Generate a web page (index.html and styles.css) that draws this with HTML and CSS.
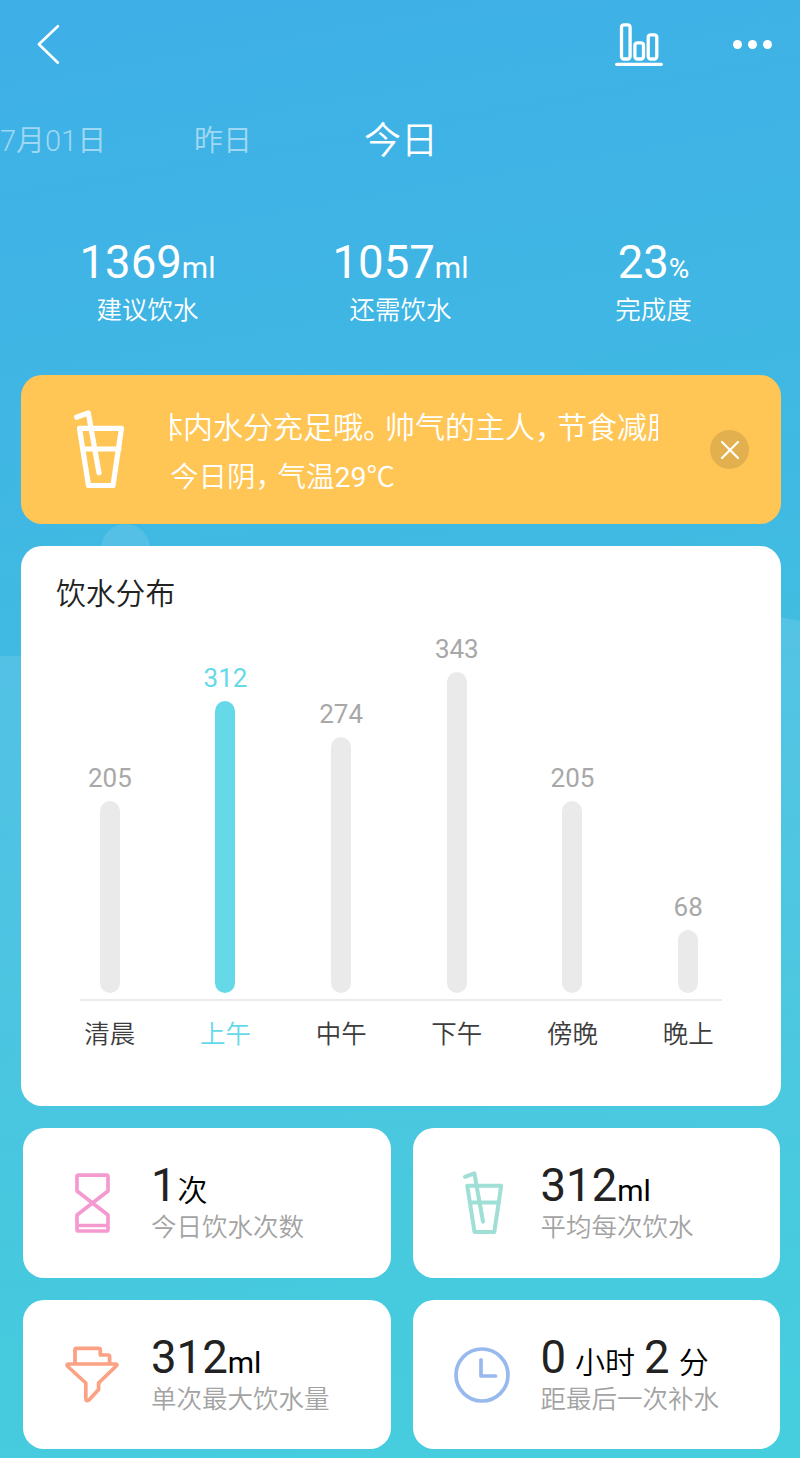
FILE: index.html
```
<!DOCTYPE html>
<html lang="zh-CN">
<head>
    <meta charset="UTF-8">
    <meta name="viewport" content="width=device-width, initial-scale=1.0">
    <title>今日饮水</title>
    <link rel="stylesheet" href="styles.css">
</head>
<body>
    <!-- Iconos compartidos -->
    <svg class="defs" width="0" height="0">
        <symbol id="cup" viewBox="0 0 52 80">
            <path d="M3.7 8.3 15.3 3.9 26 63.7M6.5 19.3H48.5L40 76.5H15.5ZM10 40H46"/>
        </symbol>
    </svg>

    <div class="app">
        <div class="bubble"></div>
        <svg class="waves" viewBox="0 0 800 860" preserveAspectRatio="none">
            <defs>
                <linearGradient id="fade" x1="0" y1="0" x2="0" y2="1">
                    <stop offset="0" stop-color="#fff" stop-opacity=".11"/>
                    <stop offset="1" stop-color="#fff" stop-opacity="0"/>
                </linearGradient>
            </defs>
            <path fill="url(#fade)" d="M0 58C200 60 280 -40 500 -30C650 -20 720 10 800 23V700H0Z"/>
        </svg>

        <header class="topbar">
            <svg class="back" width="24" height="42" viewBox="0 0 24 42"><path d="M20.9 3.2 1.9 21.3 20.9 39.7"/></svg>
            <div class="tools">
                <svg class="chart-icon" width="48" height="44" viewBox="0 0 48 44">
                    <rect x="6.5" y="1.8" width="8.6" height="34.2" rx="2.5"/>
                    <rect x="19.9" y="19.8" width="8.6" height="16.2" rx="2.5"/>
                    <rect x="33.2" y="11.8" width="8.6" height="24.2" rx="2.5"/>
                    <path d="M1.7 41.3H46.3"/>
                </svg>
                <div class="more"><i></i><i></i><i></i></div>
            </div>
        </header>

        <nav class="days">
            <span>07月01日</span>
            <span>昨日</span>
            <span class="active">今日</span>
        </nav>

        <section class="stats">
            <div class="stat">
                <div class="num">1369<small>ml</small></div>
                <div class="label">建议饮水</div>
            </div>
            <div class="stat">
                <div class="num">1057<small>ml</small></div>
                <div class="label">还需饮水</div>
            </div>
            <div class="stat">
                <div class="num">23<small class="pct">%</small></div>
                <div class="label">完成度</div>
            </div>
        </section>

        <section class="notice">
            <svg class="notice-icon" width="52" height="80"><use href="#cup"/></svg>
            <div class="notice-text">
                <p class="marquee"><span>体内水分充足哦<b>。</b>帅气的主人<b>，</b>节食减肥</span></p>
                <p class="weather">今日阴<b>，</b>气温<em>29</em>℃</p>
            </div>
            <div class="close">
                <svg width="20" height="20" viewBox="0 0 20 20"><path d="M2 2 18 18M18 2 2 18"/></svg>
            </div>
        </section>

        <section class="chart">
            <h2>饮水分布</h2>
            <div class="bars">
                <div class="col"><span>205</span><div class="bar" style="height:192px"></div></div>
                <div class="col on"><span>312</span><div class="bar" style="height:292px"></div></div>
                <div class="col"><span>274</span><div class="bar" style="height:256px"></div></div>
                <div class="col"><span>343</span><div class="bar" style="height:321px"></div></div>
                <div class="col"><span>205</span><div class="bar" style="height:192px"></div></div>
                <div class="col"><span>68</span><div class="bar" style="height:63px"></div></div>
            </div>
            <div class="axis"></div>
            <div class="names">
                <span>清晨</span>
                <span class="on">上午</span>
                <span>中午</span>
                <span>下午</span>
                <span>傍晚</span>
                <span>晚上</span>
            </div>
        </section>

        <section class="cards">
            <div class="card">
                <div class="icon pink">
                    <svg width="36" height="60" viewBox="0 0 36 60"><path d="M4.5 2.2H31.5Q33 2.2 33 3.7V18L2 42V56.5Q2 58 3.5 58H31.5Q33 58 33 56.5V42L2 18V3.7Q2 2.2 3.5 2.2ZM2 52.5H33"/></svg>
                </div>
                <div class="info">
                    <div class="num">1<small class="times">次</small></div>
                    <div class="label">今日饮水次数</div>
                </div>
            </div>
            <div class="card">
                <div class="icon green">
                    <svg width="42" height="65"><use href="#cup"/></svg>
                </div>
                <div class="info">
                    <div class="num">312<small>ml</small></div>
                    <div class="label">平均每次饮水</div>
                </div>
            </div>
            <div class="card">
                <div class="icon orange">
                    <svg width="54" height="57" viewBox="0 0 54 57"><path d="M10 18V4Q10 2.4 11.6 2.4H33.7Q35.3 2.4 35.3 4V9H43Q44.6 9 44.6 10.6V18M3.5 18H50.5Q53 18 51.2 20L33.6 37V43.5L24 54Q20.8 56 20.8 52.5V37L2.8 20.5Q1 18 3.5 18Z"/></svg>
                </div>
                <div class="info">
                    <div class="num">312<small>ml</small></div>
                    <div class="label">单次最大饮水量</div>
                </div>
            </div>
            <div class="card">
                <div class="icon blue">
                    <svg width="56" height="56" viewBox="0 0 56 56"><circle cx="28" cy="28" r="26"/><path d="M27 12.8V29H41.5"/></svg>
                </div>
                <div class="info">
                    <div class="num">0<small class="gap">小时</small>2<small class="gap">分</small></div>
                    <div class="label">距最后一次补水</div>
                </div>
            </div>
        </section>
    </div>
</body>
</html>
```
FILE: styles.css
```
* { box-sizing: border-box; margin: 0; padding: 0; }
body {
    font-family: Roboto, 'Noto Sans CJK SC', sans-serif;
    color: white;
}
svg { display: block; fill: none; stroke: currentColor; stroke-linecap: round; stroke-linejoin: round; }
.defs { position: absolute; }
.app {
    position: relative;
    width: 800px;
    height: 1458px;
    overflow: hidden;
    background: linear-gradient(170deg, #3eafe7 0%, #40bae2 40%, #46cade 85%, #46cede 100%);
}

/* fondo */
.bubble {
    position: absolute;
    left: 101px;
    top: 524px;
    width: 49px;
    height: 49px;
    border-radius: 50%;
    background: rgba(255,255,255,0.11);
}
.waves { position: absolute; left: 0; top: 598px; width: 800px; height: 860px; stroke: none; }

/* barra superior */
.topbar {
    position: relative;
    height: 90px;
    padding: 23px 28px 0 37px;
    display: flex;
    justify-content: space-between;
}
.back { stroke-width: 2.6; }
.tools { display: flex; gap: 70px; }
.chart-icon { stroke-width: 3.3; }
.more { display: flex; gap: 6px; padding-top: 17px; }
.more i { width: 9px; height: 9px; border-radius: 50%; background: white; }

/* fechas */
.days {
    position: relative;
    display: flex;
    margin-left: -44px;
    height: 100px;
    line-height: 103px;
    font-size: 29px;
    font-weight: 350;
}
.days span { width: 178px; text-align: center; color: rgba(255,255,255,0.5); }
.days .active { font-size: 37px; color: white; }

/* resumen */
.stats {
    position: relative;
    display: grid;
    grid-template-columns: repeat(3, 1fr);
    margin: 45px 20px 0 21px;
    height: 140px;
    text-align: center;
}
.num { font-size: 45.5px; line-height: 56px; height: 56px; white-space: nowrap; }
.num small { font-size: 30px; }
.num .pct { font-size: 28px; }
.label { font-size: 25.5px; line-height: 36px; font-weight: 350; white-space: nowrap; }
.stats .label { margin-top: 1px; }

/* aviso */
.notice {
    position: relative;
    display: flex;
    margin: 0 19px 0 21px;
    height: 149px;
    padding: 34px 32px 0 52px;
    border-radius: 21px;
    background: #ffc656;
}
.notice-icon { stroke-width: 5.2; }
.notice-text { width: 488px; margin-left: 45px; font-size: 30px; font-weight: 350; }
.notice-text b { display: inline-block; width: 22px; font-weight: 350; font-feature-settings: 'halt'; }
.notice-text em { font-style: normal; font-weight: 400; }
.marquee { height: 36px; line-height: 38px; overflow: hidden; white-space: nowrap; }
.marquee span { margin-left: -17px; }
.weather { margin-top: 14px; height: 36px; line-height: 38px; font-size: 28.5px; }
.close {
    width: 39px;
    height: 39px;
    margin: 21px 0 0 auto;
    display: flex;
    align-items: center;
    justify-content: center;
    border-radius: 50%;
    background: #e2b04f;
    stroke-width: 2.2;
}

/* distribución */
.chart {
    position: relative;
    margin: 22px 19px 0 21px;
    height: 560px;
    padding: 26px 35px 0 31px;
    border-radius: 21px;
    background: white;
    color: #3c3c3c;
}
.chart h2 { margin-left: 4px; height: 42px; line-height: 43px; font-size: 29.8px; font-weight: 350; color: #222; }
.bars { display: grid; grid-template-columns: repeat(6, 1fr); height: 379px; }
.col {
    display: flex;
    flex-direction: column;
    align-items: center;
    justify-content: flex-end;
    gap: 7px;
    color: #a8a8a8;
}
.col span { font-size: 26px; line-height: 32px; }
.bar { width: 20px; border-radius: 10px; background: #eaeaea; }
.col.on { color: #66d9e9; }
.on .bar { background: #66d9e9; }
.axis { height: 2px; margin: 6px 24px 0 28px; background: #ebebeb; }
.names { display: grid; grid-template-columns: repeat(6, 1fr); margin-top: 15px; text-align: center; font-size: 25.5px; line-height: 37px; font-weight: 350; }
.names .on { color: #66d9e9; }

/* tarjetas */
.cards {
    position: relative;
    display: grid;
    grid-template-columns: 1fr 1fr;
    gap: 22px;
    margin: 22px 20px 0 23px;
}
.card { height: 150px; display: flex; border-radius: 21px; background: white; color: #222; }
.card:nth-child(n+3) { height: 149px; }
.icon { width: 128px; padding: 0 0 0 11px; height: 149px; display: flex; align-items: center; justify-content: center; stroke-width: 3.7; }
.info { padding-top: 30px; }
.card .num small { color: #000; }
.card .num .times { margin-left: 1px; font-weight: 350; }
.card .num .gap { margin: 0 9px; font-weight: 350; }
.card .label { color: #a3a3a3; margin-top: -5px; }
.pink { color: #f49ad1; }
.green { color: #9fdfd6; stroke-width: 5; padding-left: 13px; }
.orange { color: #fba184; padding-left: 9px; }
.blue { color: #98b9ee; padding-left: 10px; }
```
